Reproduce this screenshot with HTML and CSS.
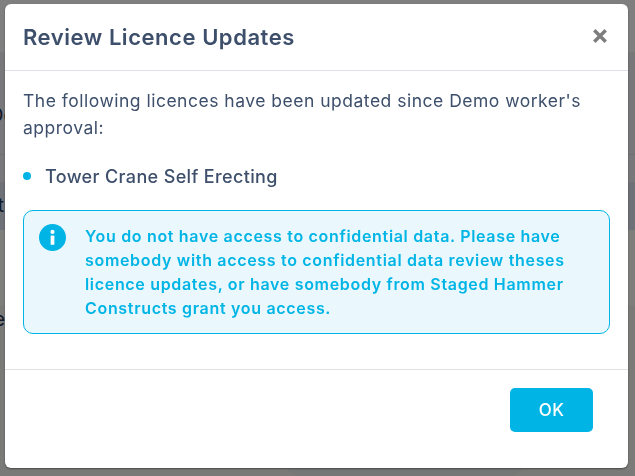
FILE: index.html
```html
<!DOCTYPE html>
<html lang="en">
<head>
<meta charset="utf-8">
<title>Review Licence Updates</title>
<link rel="stylesheet" href="styles.css">
</head>
<body>
<main class="page">
  <div class="page-top"></div>
  <div class="page-intro"><span>Do</span></div>
  <div class="page-gap"></div>
  <div class="page-band"><span>Start</span></div>
  <div class="page-mid"></div>
  <div class="page-low"><span>Licence</span><div class="page-pill"></div></div>
</main>
<div class="backdrop">
  <div class="modal">
    <header class="modal-header">
      <h2 class="modal-title">Review Licence Updates</h2>
      <svg class="close" viewBox="0 0 14 14" aria-label="Close"><path d="M2 2L12 12M12 2L2 12"/></svg>
    </header>
    <div class="modal-body">
      <p class="intro">The following licences have been updated since Demo worker's approval:</p>
      <ul class="licences"><li>Tower Crane Self Erecting</li></ul>
      <div class="notice">
        <svg class="notice-icon" viewBox="0 0 26 26"><circle cx="13" cy="13" r="13" fill="#00b5e5"/><circle cx="13" cy="7.6" r="2" fill="#fff"/><rect x="11.2" y="11" width="3.6" height="9" rx=".6" fill="#fff"/></svg>
        <p class="notice-text">You do not have access to confidential data. Please have somebody with access to confidential data review theses licence updates, or have somebody from Staged Hammer Constructs grant you access.</p>
      </div>
    </div>
    <footer class="modal-footer"><button class="ok" type="button">OK</button></footer>
  </div>
</div>
</body>
</html>
```
FILE: styles.css
```css
* { box-sizing: border-box; }
html, body { margin: 0; height: 100%; }
body { font-family: Inter, "Open Sans", sans-serif; color: #3d4f6b; overflow: hidden; background: #fff; }
.page { width: 635px; height: 476px; display: flex; flex-direction: column; font-size: 20px; color: #1e3350; overflow: hidden; white-space: nowrap; }
.page-top { height: 52px; background: #ffffff; }
.page-intro { height: 103px; background: #f1f1f6; border-bottom: 1px solid #e0e0e0; padding-top: 51px; }
.page-gap { height: 27px; background: #f1f1f6; }
.page-band { height: 48px; background: #dde2f0; padding-top: 11px; }
.page-mid { height: 75px; background: #fdfdf9; }
.page-low { flex: 1; background: #f4f4f0; display: flex; flex-direction: column; }
.page-intro span { display: block; margin-left: -11px; }
.page-band span { display: block; margin-left: -41px; }
.page-low span { display: block; margin-left: -69px; margin-top: 2px; }
.page-pill { width: 240px; height: 16px; margin: auto 0 0 285px; background: #eaf0ec; border-radius: 0 0 30px 30px; }
.backdrop { position: fixed; inset: 0; background: rgba(0, 0, 0, .5); padding: 4px 7px 8px 5px; }
.modal { width: 623px; height: 464px; background: #fff; border-radius: 6px; display: flex; flex-direction: column; box-shadow: 0 1px 2px rgba(0, 0, 0, .4); }
.modal-header { height: 67px; flex: none; border-bottom: 1px solid #e0e0ea; display: flex; align-items: center; justify-content: space-between; padding: 0 20px 1px 18px; }
.modal-title { margin: 0; font-size: 22px; font-weight: 600; color: #3d4f6b; letter-spacing: .55px; }
.close { width: 16px; height: 16px; fill: none; stroke: #7d7d7d; stroke-width: 3; margin-bottom: 2px; }
.modal-body { flex: 1; padding: 16px 18px 0; }
.intro { margin: 0; font-size: 17.5px; line-height: 27px; width: 580px; letter-spacing: .5px; }
.licences { margin: 23px 0 0; padding: 0 0 0 22px; list-style: none; }
.licences li { position: relative; font-size: 18px; font-weight: 500; line-height: 26px; letter-spacing: .36px; }
.licences li::before { content: ""; position: absolute; left: -22px; top: 8px; width: 8px; height: 8px; border-radius: 50%; background: #00b5e5; }
.notice { margin-top: 20px; height: 124px; border: 1px solid #00b5e5; border-radius: 10px; background: #eaf8fe; display: flex; gap: 19px; padding: 13px 15px; }
.notice-icon { width: 27px; height: 27px; flex: none; }
.notice-text { margin: 0; font-size: 16px; font-weight: 600; line-height: 24px; color: #00b5e5; width: 490px; letter-spacing: .68px; }
.modal-footer { height: 99px; flex: none; border-top: 1px solid #e2e2e2; display: flex; justify-content: flex-end; padding: 18px 35px 0 0; }
.ok { width: 83px; height: 44px; border: 0; border-radius: 5px; background: #00b5e5; color: #fff; font: 500 17px Inter, sans-serif; letter-spacing: .5px; }
```
